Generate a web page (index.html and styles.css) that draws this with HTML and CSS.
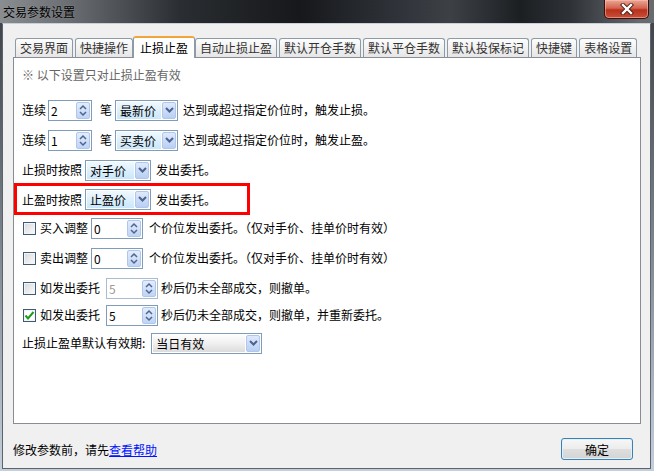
FILE: index.html
```html
<!DOCTYPE html>
<html lang="zh-CN">
<head>
    <meta charset="UTF-8">
    <title>交易参数设置</title>
    <link rel="stylesheet" href="styles.css">
</head>
<body>
<div class="window">
    <div class="titlebar">
        <span class="title">交易参数设置</span>
        <div class="close-btn">
            <svg width="14" height="12" viewBox="0 0 14 12">
                <path d="M3 2 L11 10 M11 2 L3 10" stroke="#4a1d14" stroke-width="4.2" stroke-linecap="square"/>
                <path d="M3 2 L11 10 M11 2 L3 10" stroke="#fff" stroke-width="2.4" stroke-linecap="square"/>
            </svg>
        </div>
    </div>

    <div class="client">
        <ul class="tabs">
            <li>交易界面</li>
            <li>快捷操作</li>
            <li class="active">止损止盈</li>
            <li>自动止损止盈</li>
            <li>默认开仓手数</li>
            <li>默认平仓手数</li>
            <li>默认投保标记</li>
            <li>快捷键</li>
            <li>表格设置</li>
        </ul>

        <div class="panel">
            <p class="note">※ 以下设置只对止损止盈有效</p>

            <div class="row r1">
                <span>连续</span>
                <span class="spin s-first">
                    <span class="val">2</span>
                    <span class="spin-btn"><svg width="8" height="13" viewBox="0 0 8 13"><path d="M1 5 L4 2 L7 5 M1 8 L4 11 L7 8" fill="none" stroke="#4d6592" stroke-width="1.5"/></svg></span>
                </span>
                <span class="unit">笔</span>
                <span class="combo blue c-price">
                    <span class="val">最新价</span>
                    <span class="arrow"><svg width="9" height="6" viewBox="0 0 9 6"><path d="M1 1 L4.5 4.5 L8 1" fill="none" stroke="#4a6391" stroke-width="2"/></svg></span>
                </span>
                <span class="after">达到或超过指定价位时，触发止损。</span>
            </div>

            <div class="row r2">
                <span>连续</span>
                <span class="spin s-first">
                    <span class="val">1</span>
                    <span class="spin-btn"><svg width="8" height="13" viewBox="0 0 8 13"><path d="M1 5 L4 2 L7 5 M1 8 L4 11 L7 8" fill="none" stroke="#4d6592" stroke-width="1.5"/></svg></span>
                </span>
                <span class="unit">笔</span>
                <span class="combo blue c-price">
                    <span class="val">买卖价</span>
                    <span class="arrow"><svg width="9" height="6" viewBox="0 0 9 6"><path d="M1 1 L4.5 4.5 L8 1" fill="none" stroke="#4a6391" stroke-width="2"/></svg></span>
                </span>
                <span class="after">达到或超过指定价位时，触发止盈。</span>
            </div>

            <div class="row r3">
                <span>止损时按照</span>
                <span class="combo blue c-mode">
                    <span class="val">对手价</span>
                    <span class="arrow"><svg width="9" height="6" viewBox="0 0 9 6"><path d="M1 1 L4.5 4.5 L8 1" fill="none" stroke="#4a6391" stroke-width="2"/></svg></span>
                </span>
                <span class="after">发出委托。</span>
            </div>

            <div class="highlight">
                <span>止盈时按照</span>
                <span class="combo blue c-mode">
                    <span class="val">止盈价</span>
                    <span class="arrow"><svg width="9" height="6" viewBox="0 0 9 6"><path d="M1 1 L4.5 4.5 L8 1" fill="none" stroke="#4a6391" stroke-width="2"/></svg></span>
                </span>
                <span class="after">发出委托。</span>
            </div>

            <div class="row r5">
                <span class="cb"></span>
                <span class="cb-label">买入调整</span>
                <span class="spin s-adj">
                    <span class="val">0</span>
                    <span class="spin-btn"><svg width="8" height="13" viewBox="0 0 8 13"><path d="M1 5 L4 2 L7 5 M1 8 L4 11 L7 8" fill="none" stroke="#4d6592" stroke-width="1.5"/></svg></span>
                </span>
                <span class="after-adj">个价位发出委托。（仅对手价、挂单价时有效）</span>
            </div>

            <div class="row r6">
                <span class="cb"></span>
                <span class="cb-label">卖出调整</span>
                <span class="spin s-adj">
                    <span class="val">0</span>
                    <span class="spin-btn"><svg width="8" height="13" viewBox="0 0 8 13"><path d="M1 5 L4 2 L7 5 M1 8 L4 11 L7 8" fill="none" stroke="#4d6592" stroke-width="1.5"/></svg></span>
                </span>
                <span class="after-adj">个价位发出委托。（仅对手价、挂单价时有效）</span>
            </div>

            <div class="row r7">
                <span class="cb"></span>
                <span class="cb-label">如发出委托</span>
                <span class="spin s-sec disabled">
                    <span class="val">5</span>
                    <span class="spin-btn"><svg width="8" height="13" viewBox="0 0 8 13"><path d="M1 5 L4 2 L7 5 M1 8 L4 11 L7 8" fill="none" stroke="#4d6592" stroke-width="1.5"/></svg></span>
                </span>
                <span class="after-sec">秒后仍未全部成交，则撤单。</span>
            </div>

            <div class="row r8">
                <span class="cb checked"><svg width="11" height="11" viewBox="0 0 11 11"><path d="M1.5 5.5 L4 8.5 L9.5 2" fill="none" stroke="#1e9a1e" stroke-width="2"/></svg></span>
                <span class="cb-label">如发出委托</span>
                <span class="spin s-sec">
                    <span class="val">5</span>
                    <span class="spin-btn"><svg width="8" height="13" viewBox="0 0 8 13"><path d="M1 5 L4 2 L7 5 M1 8 L4 11 L7 8" fill="none" stroke="#4d6592" stroke-width="1.5"/></svg></span>
                </span>
                <span class="after-sec">秒后仍未全部成交，则撤单，并重新委托。</span>
            </div>

            <div class="row r9">
                <span>止损止盈单默认有效期:</span>
                <span class="combo gray c-valid">
                    <span class="val">当日有效</span>
                    <span class="arrow"><svg width="9" height="6" viewBox="0 0 9 6"><path d="M1 1 L4.5 4.5 L8 1" fill="none" stroke="#4a6391" stroke-width="2"/></svg></span>
                </span>
            </div>
        </div>

        <div class="footer">
            <p class="hint">修改参数前，请先<a href="#">查看帮助</a></p>
            <button class="ok">确定</button>
        </div>
    </div>
</div>
</body>
</html>
```

FILE: styles.css
```css
* {
    box-sizing: border-box;
}

body {
    margin: 0;
    width: 654px;
    height: 471px;
    overflow: hidden;
    font-family: "Noto Sans CJK SC", "Liberation Sans", sans-serif;
    font-size: 12px;
    color: #000;
}

.window {
    height: 471px;
    background: linear-gradient(#3a3f44, #6c747c 40%, #c3d0dc);
}

/* title bar */
.titlebar {
    height: 23px;
    display: flex;
    justify-content: space-between;
    align-items: flex-start;
    background: linear-gradient(90deg, #8a8e91 0, #6a6e72 70px, #2a2d31 180px, #16181b 300px, #30343a 400px, #3d4146 450px, #1c1f22 520px, #2e3236 570px, #676b6f 640px);
}

.title {
    padding-left: 3px;
    line-height: 23px;
    color: #000;
    text-shadow: 0 0 2px rgba(200, 200, 200, .4);
}

.close-btn {
    width: 45px;
    height: 19px;
    margin-right: 5px;
    display: flex;
    align-items: center;
    justify-content: center;
    border: 1px solid #3c1008;
    border-top: none;
    border-radius: 0 0 5px 5px;
    background: linear-gradient(#e9a795, #d3644f 45%, #b9301c 55%, #c9503a);
    box-shadow: inset 0 0 0 1px rgba(255, 200, 190, .5);
}

/* client area */
.client {
    margin: 0 3px 0 2px;
    height: 446px;
    background: #f0f0f0;
    border: 1px solid #5b646c;
    border-top-color: #c9d1d8;
}

.tabs {
    list-style: none;
    margin: 0 0 0 12px;
    padding: 0;
    padding-top: 12px;
    height: 33px;
    display: flex;
    align-items: flex-end;
    gap: 2px;
    position: relative;
    z-index: 2;
}

.tabs li {
    height: 19px;
    padding: 0 4px;
    line-height: 17px;
    color: #333;
    text-align: center;
    border: 1px solid #8c9ba6;
    border-bottom: none;
    border-radius: 3px 3px 0 0;
    background: linear-gradient(#fdfdfd, #e6e6e6);
}

.tabs li.active {
    height: 22px;
    margin: 0 -2px -1px;
    padding: 0 6px;
    line-height: 19px;
    color: #000;
    background: #fff;
    border-top: 2px solid #f2a53a;
}

.panel {
    margin-left: 10px;
    width: 628px;
    height: 367px;
    background: #fff;
    border: 1px solid #898c95;
    padding: 9px 0 0 8px;
}

.note {
    margin: 0;
    height: 16px;
    line-height: 16px;
    color: #666;
}

.row {
    display: flex;
    align-items: center;
    height: 22px;
    line-height: 16px;
    margin-top: 8px;
}

.r1 { margin-top: 16px; }
.r5 { margin-top: 2px; }
.r8 { margin-top: 5px; }
.r9 { margin-top: 6px; }

.highlight {
    display: flex;
    align-items: center;
    margin: 2px 0 0 -8px;
    width: 236px;
    height: 32px;
    padding-left: 5px;
    border: 3px solid #f00;
}

/* spin box */
.spin {
    display: flex;
    height: 21px;
    border: 1px solid #7f9db9;
    background: #fff;
}

.spin .val {
    flex: 1;
    padding-left: 2px;
    line-height: 19px;
}

.spin-btn {
    width: 14px;
    margin: 1px;
    display: flex;
    align-items: center;
    justify-content: center;
    border: 1px solid #b0c6ec;
    border-radius: 2px;
    background: linear-gradient(#e3ecfb, #c0d4f4);
}

.spin.disabled {
    border-color: #a9bdd0;
}

.spin.disabled .val {
    color: #9a9a9a;
}

.s-first { width: 44px; margin-left: 2px; }
.s-adj { width: 52px; margin-left: 3px; }
.s-sec { width: 52px; margin-left: 6px; }

.unit { margin-left: 8px; }

/* combo box */
.combo {
    display: flex;
    height: 21px;
    border: 1px solid #7f9db9;
    background: #fff;
}

.combo .val {
    flex: 1;
    margin: 1px 0 1px 1px;
    padding-left: 3px;
    line-height: 17px;
}

.combo.blue .val {
    background: linear-gradient(#f0f8fe, #c9e7fa);
}

.combo.gray .val {
    background: linear-gradient(#fdfdfd, #f0f0f0 50%, #dcdcdc);
}

.combo .arrow {
    width: 14px;
    margin: 1px;
    display: flex;
    align-items: center;
    justify-content: center;
    border: 1px solid #b0c6ec;
    border-radius: 2px;
    background: linear-gradient(#dfe9fb, #b9cff3);
}

.c-price { width: 63px; margin-left: 3px; }
.c-mode { width: 66px; margin-left: 3px; }
.c-valid { width: 111px; margin-left: 6px; }

.after { margin-left: 5px; }
.after-adj { margin-left: 6px; }
.after-sec { margin-left: 3px; }

/* checkbox */
.cb {
    width: 13px;
    height: 13px;
    margin-left: 1px;
    display: flex;
    align-items: center;
    justify-content: center;
    border: 1px solid #3d5a78;
    background: linear-gradient(135deg, #d6d9dc, #fbfbfb);
    box-shadow: inset 0 0 0 1px #f4f4f4;
}

.cb.checked {
    background: #fff;
}

.cb-label { margin-left: 4px; }

/* footer */
.footer {
    height: 44px;
    padding: 6px 17px 0 10px;
    display: flex;
    align-items: center;
    justify-content: space-between;
}

.hint {
    margin: 0;
}

.hint a {
    color: #0014ff;
}

.ok {
    width: 72px;
    height: 22px;
    padding: 0;
    font-family: inherit;
    font-size: 12px;
    color: #000;
    border: 1px solid #3c7fb1;
    border-radius: 3px;
    background: linear-gradient(#f7f7f7, #ececec 50%, #dedede 51%, #d4d4d4);
    box-shadow: inset 0 0 0 1px #dff1fb;
}
```
